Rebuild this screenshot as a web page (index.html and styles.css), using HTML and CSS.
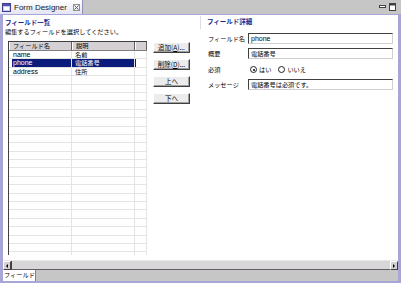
FILE: index.html
```html
<!DOCTYPE html>
<html lang="ja">
<head>
    <meta charset="UTF-8">
    <title>Form Designer</title>
    <link rel="stylesheet" href="styles.css">
</head>
<body>
    <div class="topbar">
        <div class="editor-tab">
            <svg class="tab-icon" width="9" height="9" viewBox="0 0 9 9">
                <rect x="0.5" y="0.5" width="8" height="8" fill="#c8c8f0" stroke="#40408c"/>
                <rect x="1" y="1" width="7" height="2" fill="#5050b0"/>
                <rect x="2" y="4" width="5" height="3" fill="#ffffff"/>
            </svg>
            <span class="tab-title">Form Designer</span>
            <svg class="tab-close" width="7" height="7" viewBox="0 0 7 7">
                <rect x="0.5" y="0.5" width="6" height="6" fill="none" stroke="#909090"/>
                <path d="M1.5 1.5 L5.5 5.5 M5.5 1.5 L1.5 5.5" stroke="#606060" stroke-width="1"/>
            </svg>
        </div>
        <div class="win-ctrl">
            <svg width="18" height="8" viewBox="0 0 18 8">
                <rect x="0.5" y="2.5" width="6" height="2" fill="#fff" stroke="#404040"/>
                <rect x="10.5" y="0.5" width="6" height="7" fill="#fff" stroke="#404040"/>
                <rect x="11" y="1" width="5" height="1.5" fill="#404040"/>
            </svg>
        </div>
    </div>

    <div class="frame">
        <div class="content">
            <section class="list-pane">
                <h2 class="pane-title">フィールド一覧</h2>
                <p class="hint">編集するフィールドを選択してください。</p>
                <div class="list-body">
                    <div class="grid">
                        <div class="grid-head">
                            <div class="hcell">フィールド名</div>
                            <div class="hcell">説明</div>
                            <div class="hcell"></div>
                        </div>
                        <div class="grid-rows">
                            <div class="row"><div class="cell">name</div><div class="cell">名前</div><div class="cell"></div></div>
                            <div class="row selected"><div class="cell">phone</div><div class="cell">電話番号</div><div class="cell"></div></div>
                            <div class="row"><div class="cell">address</div><div class="cell">住所</div><div class="cell"></div></div>
                            <div class="row"><div class="cell"></div><div class="cell"></div><div class="cell"></div></div>
                            <div class="row"><div class="cell"></div><div class="cell"></div><div class="cell"></div></div>
                            <div class="row"><div class="cell"></div><div class="cell"></div><div class="cell"></div></div>
                            <div class="row"><div class="cell"></div><div class="cell"></div><div class="cell"></div></div>
                            <div class="row"><div class="cell"></div><div class="cell"></div><div class="cell"></div></div>
                            <div class="row"><div class="cell"></div><div class="cell"></div><div class="cell"></div></div>
                            <div class="row"><div class="cell"></div><div class="cell"></div><div class="cell"></div></div>
                            <div class="row"><div class="cell"></div><div class="cell"></div><div class="cell"></div></div>
                            <div class="row"><div class="cell"></div><div class="cell"></div><div class="cell"></div></div>
                            <div class="row"><div class="cell"></div><div class="cell"></div><div class="cell"></div></div>
                            <div class="row"><div class="cell"></div><div class="cell"></div><div class="cell"></div></div>
                            <div class="row"><div class="cell"></div><div class="cell"></div><div class="cell"></div></div>
                            <div class="row"><div class="cell"></div><div class="cell"></div><div class="cell"></div></div>
                            <div class="row"><div class="cell"></div><div class="cell"></div><div class="cell"></div></div>
                            <div class="row"><div class="cell"></div><div class="cell"></div><div class="cell"></div></div>
                            <div class="row"><div class="cell"></div><div class="cell"></div><div class="cell"></div></div>
                            <div class="row"><div class="cell"></div><div class="cell"></div><div class="cell"></div></div>
                            <div class="row"><div class="cell"></div><div class="cell"></div><div class="cell"></div></div>
                            <div class="row"><div class="cell"></div><div class="cell"></div><div class="cell"></div></div>
                            <div class="row"><div class="cell"></div><div class="cell"></div><div class="cell"></div></div>
                            <div class="row"><div class="cell"></div><div class="cell"></div><div class="cell"></div></div>
                            <div class="row"><div class="cell"></div><div class="cell"></div><div class="cell"></div></div>
                        </div>
                    </div>
                    <div class="buttons">
                        <button>追加(<u>A</u>)...</button>
                        <button>削除(<u>D</u>)...</button>
                        <button>上へ</button>
                        <button>下へ</button>
                    </div>
                </div>
            </section>

            <section class="detail-pane">
                <h2 class="pane-title detail-title">フィールド詳細</h2>
                <div class="form">
                    <div class="form-row">
                        <label class="lbl">フィールド名</label>
                        <div class="field latin">phone</div>
                    </div>
                    <div class="form-row">
                        <label class="lbl">概要</label>
                        <div class="field">電話番号</div>
                    </div>
                    <div class="form-row radio-row">
                        <label class="lbl">必須</label>
                        <span class="radio checked"></span><span class="radio-text">はい</span>
                        <span class="radio"></span><span class="radio-text">いいえ</span>
                    </div>
                    <div class="form-row">
                        <label class="lbl">メッセージ</label>
                        <div class="field">電話番号は必須です。</div>
                    </div>
                </div>
            </section>
        </div>

        <div class="hscroll">
            <div class="sbtn"><span class="arrow-left"></span></div>
            <div class="thumb"></div>
            <div class="sbtn"><span class="arrow-right"></span></div>
        </div>

        <div class="bottom-tabs">
            <div class="page-tab">フィールド</div>
        </div>
    </div>
</body>
</html>
```

FILE: styles.css
```css
body {
    margin: 0;
    width: 401px;
    height: 283px;
    overflow: hidden;
    background: #c6c6c6;
    font-family: 'Liberation Sans', 'Noto Sans CJK JP', sans-serif;
    font-size: 7px;
    color: #000;
}
.topbar {
    height: 14px;
    display: flex;
    align-items: stretch;
    background: #c6c6c6;
}
.editor-tab {
    width: 83px;
    box-sizing: border-box;
    display: flex;
    align-items: center;
    padding-left: 2px;
    background: linear-gradient(#ffffff, #e4e4f4);
    border-right: 1px solid #9090b8;
}
.tab-icon {
    flex: none;
}
.tab-title {
    font-size: 8px;
    margin-left: 3px;
    color: #202020;
}
.tab-close {
    margin-left: 6px;
}
.win-ctrl {
    margin-left: auto;
    padding: 3px 4px 0 0;
}
.frame {
    height: 269px;
    box-sizing: border-box;
    border: 3px solid #a7a6d6;
    border-top-width: 1px;
    border-bottom-width: 2px;
    display: flex;
    flex-direction: column;
}
.content {
    flex: none;
    height: 245px;
    background: #fff;
    display: flex;
}
.list-pane {
    width: 197px;
    padding: 4px 0 0 2px;
    box-sizing: border-box;
}
.pane-title {
    margin: 0;
    font-size: 6.5px;
    line-height: 8px;
    font-weight: bold;
    color: #1a2a8c;
}
.hint {
    margin: 1px 0 0;
    font-size: 6.2px;
    line-height: 8px;
}
.list-body {
    display: flex;
    margin: 5px 0 0 3px;
}
.grid {
    width: 139px;
    height: 214px;
    box-sizing: border-box;
    border-left: 1px solid #404040;
    border-top: 1px solid #404040;
    overflow: hidden;
}
.grid-head,
.row {
    display: grid;
    grid-template-columns: 63px 63px 12px;
}
.grid-head {
    height: 8px;
    background: #d4d0d4;
    border-bottom: 1px solid #808080;
}
.hcell {
    padding-left: 4px;
    line-height: 8px;
    font-size: 6.2px;
    border-right: 1px solid #606060;
    box-shadow: inset 1px 0 0 #fff;
}
.row {
    height: 8.4px;
    box-sizing: border-box;
    border-bottom: 1px solid #e4e4e4;
}
.cell {
    padding-left: 4px;
    line-height: 7.4px;
    border-right: 1px solid #e4e4e4;
    white-space: nowrap;
}
.cell:nth-child(2) {
    padding-left: 3px;
    font-size: 6.2px;
}
.row.selected {
    background: linear-gradient(to right, #fff 3px, #0c1c7c 3px, #0c1c7c 127px, #fff 127px);
    color: #fff;
}
.buttons {
    display: flex;
    flex-direction: column;
    gap: 6px;
    margin: 1px 0 0 6px;
}
.buttons button {
    width: 37px;
    height: 11px;
    padding: 0;
    font-family: 'Noto Sans CJK JP', sans-serif;
    font-size: 6.5px;
    line-height: 9px;
    color: #000;
    background: #ececec;
    border: 1px solid;
    border-color: #fff #404040 #404040 #fff;
    box-shadow: inset -1px -1px 0 #a0a0a0;
    white-space: nowrap;
}
.detail-pane {
    flex: 1;
}
.detail-title {
    margin-top: 1px;
    padding: 2px 0 3px 6px;
    border-left: 1px solid #dcdce8;
}
.form {
    padding: 4px 0 0 8px;
}
.form-row {
    display: flex;
    align-items: center;
    height: 11px;
    margin-bottom: 4px;
}
.lbl {
    flex: none;
    width: 40px;
    font-size: 6.2px;
    white-space: nowrap;
}
.field {
    width: 145px;
    height: 11px;
    box-sizing: border-box;
    border: 1px solid;
    border-color: #404040 #d0d0d0 #d0d0d0 #404040;
    padding-left: 2px;
    font-size: 6.2px;
    line-height: 9px;
    color: #000;
}
.field.latin {
    font-size: 7px;
}
.radio-row {
    margin: 5px 0 4px;
}
.radio {
    width: 7px;
    height: 7px;
    box-sizing: border-box;
    border: 1px solid #202020;
    border-radius: 50%;
    margin-left: 2px;
    position: relative;
}
.radio.checked::after {
    content: '';
    position: absolute;
    left: 1.5px;
    top: 1.5px;
    width: 2px;
    height: 2px;
    border-radius: 50%;
    background: #000;
}
.radio-text {
    font-size: 6.2px;
    margin: 0 7px 0 2px;
}
.radio-text + .radio {
    margin-left: 0;
}
.hscroll {
    flex: none;
    height: 10px;
    display: flex;
    background: #d8d6d8;
    border-top: 1px solid #e8e8e8;
    box-sizing: border-box;
}
.sbtn {
    width: 8px;
    box-sizing: border-box;
    border: 1px solid;
    border-color: #fff #404040 #404040 #fff;
    background: #d4d0d4;
    display: flex;
    align-items: center;
    justify-content: center;
}
.thumb {
    flex: 1;
    border-bottom: 1px solid #606060;
    border-left: 1px solid #404040;
}
.arrow-left {
    border-style: solid;
    border-width: 2px 2px 2px 0;
    border-color: transparent #000 transparent transparent;
}
.arrow-right {
    border-style: solid;
    border-width: 2px 0 2px 2px;
    border-color: transparent transparent transparent #000;
}
.bottom-tabs {
    flex: 1;
    min-height: 0;
    background: #c6c6c6;
    display: flex;
}
.page-tab {
    width: 31px;
    background: #fff;
    font-family: 'Noto Sans CJK JP', sans-serif;
    font-size: 6.2px;
    line-height: 10px;
    padding-left: 1px;
    border-right: 1px solid #808080;
    white-space: nowrap;
}
```
